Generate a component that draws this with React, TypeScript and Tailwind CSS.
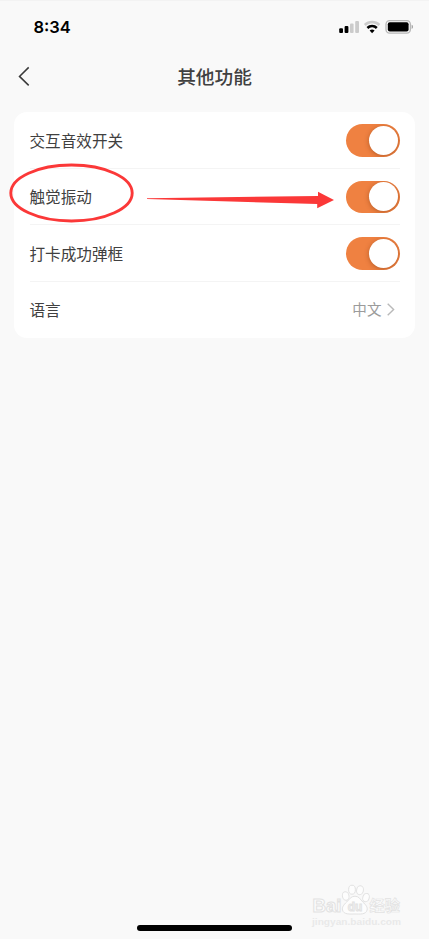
const toggles = [
  { label: '交互音效开关' },
  { label: '触觉振动' },
  { label: '打卡成功弹框' },
]

function StatusBar() {
  return (
    <div className="flex h-[54px] items-center justify-between pr-[15px] pb-[1px] pl-[33.5px]">
      <span className="pt-[2px] font-['Inter','Liberation_Sans',sans-serif] text-[16.5px] leading-none font-semibold text-black">
        8:34
      </span>
      <svg width="76" height="16" viewBox="338 19 76 16" className="shrink-0">
        {/* Signal */}
        <rect x="339.2" y="28.2" width="3.8" height="4.8" rx="1" fill="#000" />
        <rect x="344.6" y="26" width="3.8" height="7" rx="1" fill="#000" />
        <rect x="350" y="23.6" width="3.6" height="9.4" rx="1" fill="#cbcbcb" />
        <rect x="355.2" y="21" width="3.8" height="12" rx="1" fill="#cbcbcb" />
        {/* Wi-Fi */}
        <path d="M364.8 25a10.500 10.500 0 0 1 14.600 0" fill="none" stroke="#cbcbcb" strokeWidth="2.5" />
        <path d="M367.400 28a6.700 6.700 0 0 1 9.400 0" fill="none" stroke="#000" strokeWidth="2.5" />
        <path d="M372.1 33.200 369.600 30.600a3.600 3.600 0 0 1 5 0z" fill="#000" />
        {/* Battery */}
        <rect x="386" y="20.6" width="24.4" height="12.6" rx="3.6" fill="none" stroke="#b8b8b8" strokeWidth="1.3" />
        <rect x="387.8" y="22.3" width="20.8" height="9.2" rx="2" fill="#000" />
        <path d="M411.6 24.8c1.9.6 1.9 3.6 0 4.2z" fill="#a5a5a5" />
      </svg>
    </div>
  )
}

function Toggle() {
  return (
    <div className="flex h-[32.5px] w-[54px] items-center justify-end overflow-hidden rounded-full bg-[#ef8141] pr-[2px]">
      <div className="h-[29px] w-[29px] rounded-full bg-white shadow-[0_1px_5px_rgba(100,40,0,0.4)]" />
    </div>
  )
}

function Watermark() {
  return (
    <svg
      width="96"
      height="46"
      viewBox="309 884 96 46"
      className="absolute top-[884px] left-[309px]"
      fill="#fdfdfd"
      stroke="#e2e2e2"
      strokeWidth="1"
      fontFamily="'Liberation Sans', 'Noto Sans CJK SC', sans-serif"
      fontWeight="bold"
    >
      <text x="312.500" y="911.500" fontSize="18.500" textLength="29" lengthAdjust="spacingAndGlyphs">Bai</text>
      <ellipse cx="345.700" cy="896" rx="3.300" ry="4.300" transform="rotate(-12 345.7 896)" />
      <ellipse cx="352" cy="889.700" rx="3.400" ry="4.500" />
      <ellipse cx="360" cy="890.200" rx="3.400" ry="4.500" transform="rotate(10 360 890.2)" />
      <ellipse cx="366" cy="897.600" rx="3.200" ry="4.300" transform="rotate(18 366 897.6)" />
      <path d="M355 896.200c4.200 0 5.200 3.300 7.800 5.800 2.800 2.600 5 5 4.300 8-1.200 4.800-7.100 4-12.100 4s-11.400.8-12.500-4c-.7-3 1.500-5.400 4.200-8 2.700-2.500 4-5.800 8.300-5.800z" />
      <text x="347.800" y="910.800" fontSize="12.500" fill="#f4f4f4" textLength="14.500" lengthAdjust="spacingAndGlyphs">du</text>
      <text x="369.500" y="911.200" fontSize="15.200" strokeWidth="0.700">经验</text>
      <text x="312" y="924.500" fontSize="9.300" fill="#e9e9e9" stroke="none" textLength="89" lengthAdjust="spacingAndGlyphs">
        jingyan.baidu.com
      </text>
    </svg>
  )
}

export default function App() {
  return (
    <main className="relative flex h-[939px] w-[429px] flex-col overflow-hidden bg-[#f9f9f9] font-['Noto_Sans_CJK_SC',sans-serif] text-[#404040] shadow-[inset_0_1px_0_#f3f3f3]">
      <StatusBar />

      {/* Header */}
      <header className="grid h-[44px] grid-cols-[1fr_auto_1fr] items-center pl-[18px]">
        <svg width="12" height="20" viewBox="0 0 12 20" fill="none" stroke="#3a3a3a" strokeWidth="1.5">
          <path d="M10.700 1.400 1.500 10.400l9.200 9" />
        </svg>
        <h1 className="pr-[18px] text-[18.7px] leading-none font-medium">其他功能</h1>
      </header>

      {/* Settings */}
      <section className="mx-[14px] mt-[14px] h-[226px] rounded-[13px] bg-white px-[15.5px]">
        {toggles.map((item) => (
          <div
            key={item.label}
            className="flex h-[56.5px] items-center justify-between border-b border-[#f4f4f4] pt-[1px]"
          >
            <span className="pt-[1px] text-[15.6px] leading-none">{item.label}</span>
            <Toggle />
          </div>
        ))}
        <div className="flex h-[56.5px] items-center justify-between">
          <span className="text-[15.6px] leading-none">语言</span>
          <span className="flex items-center gap-[5px] pr-[5px] text-[#9b9b9b]">
            <span className="text-[14.6px] leading-none">中文</span>
            <svg width="8" height="13" viewBox="0 0 8 13" fill="none" stroke="#b9b9b9" strokeWidth="1.4">
              <path d="m.7 .8 5.900 5.700L.7 12.200" />
            </svg>
          </span>
        </div>
      </section>

      <div className="mt-auto mb-[8.5px] h-[5.500px] w-[155px] self-center rounded-full bg-black" />

      {/* Hand-drawn marks over the second row */}
      <svg width="429" height="60" viewBox="0 163 429 60" className="pointer-events-none absolute top-[163px] left-0">
        <ellipse cx="71.500" cy="193" rx="60.700" ry="28" fill="none" stroke="#fb3838" strokeWidth="2.900" />
        <path d="M147 198.200 318 196v-4.300L334 200l-16.800 8.200V204L147 199z" fill="#fb3838" />
      </svg>

      <Watermark />
    </main>
  )
}
